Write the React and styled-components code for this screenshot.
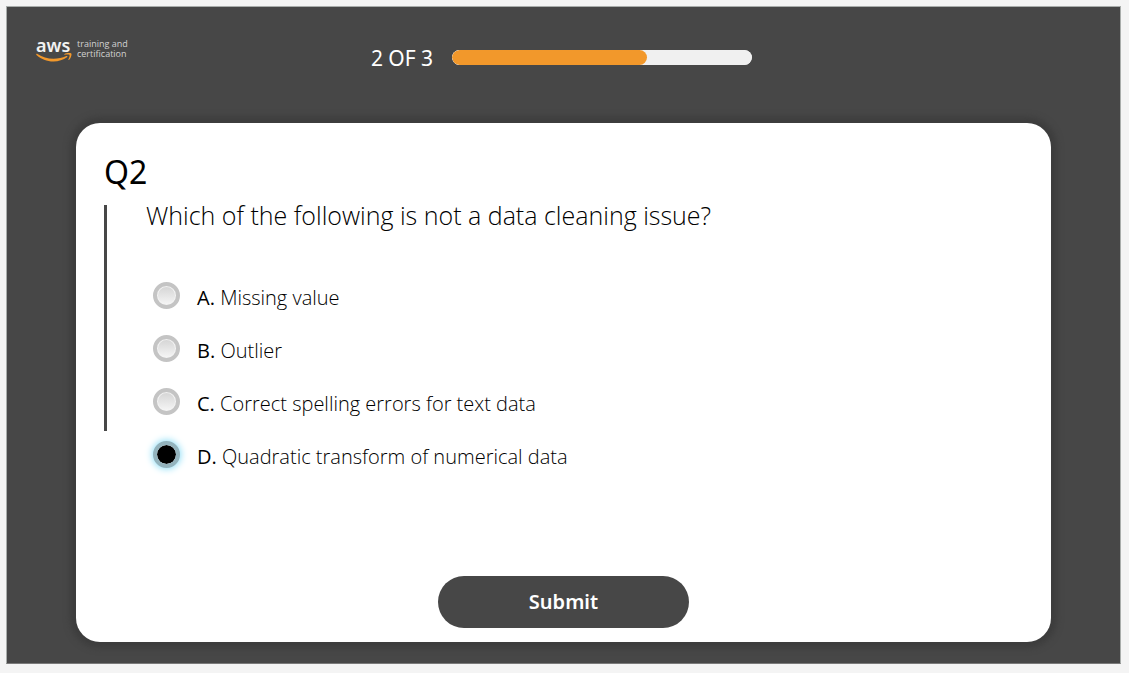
import React, { useState } from "react";
import styled, { createGlobalStyle } from "styled-components";

const GlobalStyle = createGlobalStyle`
  *, *::before, *::after { box-sizing: border-box; }
  html, body, #root { min-height: 100vh; }
  body {
    margin: 0;
    background: #f4f4f4;
    color: #000;
    font-family: "Open Sans", "Noto Sans", sans-serif;
  }
  #root { display: flex; }
`;

const Frame = styled.main`
  flex: 1;
  display: flex;
  flex-direction: column;
  margin: 6px 8px 9px 6px;
  padding: 0 69px 21px;
  background: #474747;
  border: 1px solid #a9adab;
  border-bottom-color: #7a7a7a;
`;

const Header = styled.header`
  display: grid;
  grid-template-columns: 1fr auto 1fr;
  height: 116px;
  margin: 0 -36px 0 -40px;
`;

const Logo = styled.div`
  display: flex;
  align-items: flex-start;
  gap: 6px;
  padding-top: 30px;
`;

const Mark = styled.div`
  display: flex;
  flex-direction: column;
  width: 35px;
`;

const MarkText = styled.span`
  height: 16px;
  color: #f2f2f2;
  font: 600 18px/16px "Noto Sans", sans-serif;
`;

const LogoText = styled.span`
  display: flex;
  flex-direction: column;
  padding-top: 2px;
  color: #d2d2d2;
  font: 400 9px/10px "Open Sans", sans-serif;
`;

const Status = styled.div`
  display: flex;
  align-items: center;
  gap: 19px;
  height: 101px;
`;

const Count = styled.label`
  color: #fff;
  font: 400 21px/28px "Noto Sans", sans-serif;
`;

const Bar = styled.progress`
  appearance: none;
  display: block;
  width: 300px;
  height: 15px;
  border: 0;
  border-radius: 8px;
  overflow: hidden;
  background: #f0f0f0;
  &::-webkit-progress-bar { background: #f0f0f0; border-radius: 8px; }
  &::-webkit-progress-value { background: #f2982b; border-radius: 8px; }
`;

const Card = styled.form`
  flex: 1;
  display: flex;
  flex-direction: column;
  padding: 27px 28px 14px;
  border-radius: 24px;
  background: #fff;
  box-shadow: 0 0 6px 6px #3d3d3d;
`;

const Number = styled.h1`
  margin: 0;
  font: 400 32px/44px "Noto Sans", sans-serif;
`;

const Body = styled.div`
  display: flex;
  gap: 39px;
  padding-top: 11px;
`;

const Rule = styled.div`
  flex: none;
  width: 3px;
  height: 226px;
  background: #474747;
`;

const Question = styled.fieldset`
  flex: 1;
  margin: 0;
  padding: 0;
  border: 0;
`;

const Prompt = styled.legend`
  padding: 0 0 44px;
  font-size: 25px;
  line-height: 20px;
  font-weight: 300;
`;

const Option = styled.label`
  display: flex;
  align-items: center;
  gap: 17px;
  height: 53px;
  padding-left: 7px;
  font-size: 20px;
  font-weight: 300;
`;

const Radio = styled.input`
  appearance: none;
  flex: none;
  width: 27px;
  height: 27px;
  margin: 0;
  border: 4px solid #c4c4c4;
  border-radius: 50%;
  background: linear-gradient(#d4d4d4, #f6f6f6) padding-box;
  box-shadow: inset 0 0 0 1px #f4f4f4;
  &:checked {
    border-color: #93b3bd;
    background: #000 padding-box;
    box-shadow: 0 0 7px 1px #8fdef6;
  }
`;

const Answer = styled.span`
  padding-top: 5px;
  line-height: 28px;
`;

const Letter = styled.b`
  font-weight: 500;
`;

const Submit = styled.button`
  align-self: center;
  width: 251px;
  height: 52px;
  margin-top: auto;
  border: 0;
  border-radius: 26px;
  background: #474747;
  color: #fff;
  font: 600 20px/28px "Noto Sans", sans-serif;
`;

const OPTIONS = [
  ["A", "Missing value"],
  ["B", "Outlier"],
  ["C", "Correct spelling errors for text data"],
  ["D", "Quadratic transform of numerical data"],
];

function Smile() {
  return (
    <svg width="36" height="10" viewBox="0 0 36 10" aria-hidden="true">
      <path d="M0.2 1.2C0.4 0.6 1 0.7 1.5 1C6.200 4 11.500 5.700 17.500 5.700C22 5.700 26.500 4.700 30.300 3C31.300 2.600 31.900 3.500 31 4.200C27.500 6.900 22.400 8.400 17.500 8.400C11 8.400 4.800 5.800 0.500 1.900C0.200 1.700 0.100 1.400 0.200 1.200Z" fill="#f2982b" />
      <path d="M28.300 1.200C30.300 -0.200 34.500 -0.100 35.300 0.500C36 1.400 35 5.100 33 6.900C32.600 7.200 32.200 7 32.400 6.600C33 5.200 33.900 2.800 33.500 2C33 1.400 30.300 1.600 28.700 1.800C28.200 1.800 28 1.500 28.300 1.200Z" fill="#f2982b" />
    </svg>
  );
}

export default function App() {
  const [choice, setChoice] = useState("D");
  return (
    <>
      <GlobalStyle />
      <Frame>
        <Header>
          <Logo>
            <Mark>
              <MarkText>aws</MarkText>
              <Smile />
            </Mark>
            <LogoText>
              <span>training and</span>
              <span>certification</span>
            </LogoText>
          </Logo>
          <Status>
            <Count htmlFor="progress">2 OF 3</Count>
            <Bar id="progress" max="100" value="65" />
          </Status>
        </Header>
        <Card onSubmit={(e) => e.preventDefault()}>
          <Number>Q2</Number>
          <Body>
            <Rule />
            <Question>
              <Prompt>Which of the following is not a data cleaning issue?</Prompt>
              {OPTIONS.map(([letter, text]) => (
                <Option key={letter}>
                  <Radio
                    type="radio"
                    name="answer"
                    value={letter}
                    checked={choice === letter}
                    onChange={() => setChoice(letter)}
                  />
                  <Answer>
                    <Letter>{letter}.</Letter> {text}
                  </Answer>
                </Option>
              ))}
            </Question>
          </Body>
          <Submit type="submit">Submit</Submit>
        </Card>
      </Frame>
    </>
  );
}
